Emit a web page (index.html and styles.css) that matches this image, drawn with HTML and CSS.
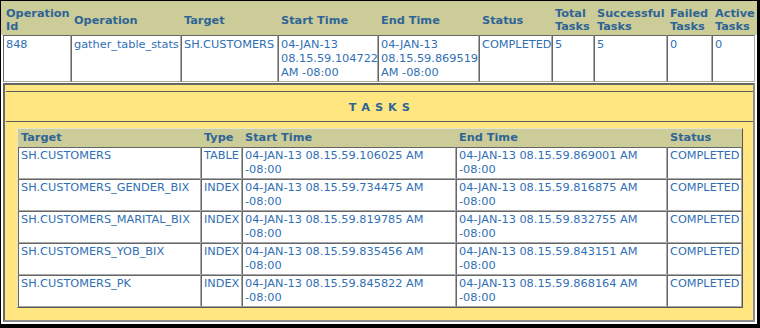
FILE: index.html
```html
<!DOCTYPE html>
<html>
<head>
<meta charset="utf-8">
<title>Operation Details</title>
<link rel="stylesheet" href="styles.css">
</head>
<body>
<div class="frame">
  <div class="ops-head">
    <div class="hc">Operation Id</div>
    <div class="hc">Operation</div>
    <div class="hc">Target</div>
    <div class="hc">Start Time</div>
    <div class="hc">End Time</div>
    <div class="hc">Status</div>
    <div class="hc">Total Tasks</div>
    <div class="hc">Successful Tasks</div>
    <div class="hc">Failed Tasks</div>
    <div class="hc">Active Tasks</div>
  </div>
  <div class="ops-row">
    <div class="dc">848</div>
    <div class="dc">gather_table_stats</div>
    <div class="dc">SH.CUSTOMERS</div>
    <div class="dc">04-JAN-13 08.15.59.104722 AM -08:00</div>
    <div class="dc">04-JAN-13 08.15.59.869519 AM -08:00</div>
    <div class="dc">COMPLETED</div>
    <div class="dc">5</div>
    <div class="dc">5</div>
    <div class="dc">0</div>
    <div class="dc">0</div>
  </div>
  <div class="tasks">
    <div class="tasks-title">T A S K S</div>
    <div class="tasks-table">
      <div class="tt-head">
        <div class="hc">Target</div>
        <div class="hc">Type</div>
        <div class="hc">Start Time</div>
        <div class="hc">End Time</div>
        <div class="hc">Status</div>
      </div>
      <div class="tt-row">
        <div class="dc">SH.CUSTOMERS</div>
        <div class="dc">TABLE</div>
        <div class="dc">04-JAN-13 08.15.59.106025 AM -08:00</div>
        <div class="dc">04-JAN-13 08.15.59.869001 AM -08:00</div>
        <div class="dc">COMPLETED</div>
      </div>
      <div class="tt-row">
        <div class="dc">SH.CUSTOMERS_GENDER_BIX</div>
        <div class="dc">INDEX</div>
        <div class="dc">04-JAN-13 08.15.59.734475 AM -08:00</div>
        <div class="dc">04-JAN-13 08.15.59.816875 AM -08:00</div>
        <div class="dc">COMPLETED</div>
      </div>
      <div class="tt-row">
        <div class="dc">SH.CUSTOMERS_MARITAL_BIX</div>
        <div class="dc">INDEX</div>
        <div class="dc">04-JAN-13 08.15.59.819785 AM -08:00</div>
        <div class="dc">04-JAN-13 08.15.59.832755 AM -08:00</div>
        <div class="dc">COMPLETED</div>
      </div>
      <div class="tt-row">
        <div class="dc">SH.CUSTOMERS_YOB_BIX</div>
        <div class="dc">INDEX</div>
        <div class="dc">04-JAN-13 08.15.59.835456 AM -08:00</div>
        <div class="dc">04-JAN-13 08.15.59.843151 AM -08:00</div>
        <div class="dc">COMPLETED</div>
      </div>
      <div class="tt-row">
        <div class="dc">SH.CUSTOMERS_PK</div>
        <div class="dc">INDEX</div>
        <div class="dc">04-JAN-13 08.15.59.845822 AM -08:00</div>
        <div class="dc">04-JAN-13 08.15.59.868164 AM -08:00</div>
        <div class="dc">COMPLETED</div>
      </div>
    </div>
  </div>
</div>
</body>
</html>
```

FILE: styles.css
```css
html, body {
  margin: 0;
  padding: 0;
  background: #ffffff;
}

.frame {
  width: 760px;
  height: 328px;
  box-sizing: border-box;
  border-style: solid;
  border-color: #000000;
  border-width: 1px 3px 4px 1px;
  background: #ffffff;
  font-family: "DejaVu Sans", Verdana, sans-serif;
  font-size: 11.3px;
  overflow: hidden;
}

.hc {
  font-weight: bold;
  color: #2f6496;
  line-height: 13px;
}

.dc {
  color: #2f6fb4;
  background: #ffffff;
  line-height: 14px;
  border: 1px solid;
  border-color: #666666 #a9a9a9 #a9a9a9 #666666;
}

/* Operation summary */
.ops-head,
.ops-row {
  display: grid;
  grid-template-columns: 68px 110px 97px 100px 101px 73px 42px 73px 45px 43px;
  padding: 0 2px;
}

.ops-head {
  background: #cccc99;
  align-items: center;
}

.ops-head .hc {
  padding: 6px 0 2px 3px;
}

.ops-head .hc:first-child {
  align-self: stretch;
}

.ops-row .dc {
  padding: 2px 0 1px 2px;
}

/* Tasks panel */
.tasks {
  margin: 1px 2px 2px;
  height: 239px;
  box-sizing: border-box;
  border: 2px solid;
  border-color: #666666 #8c8c8c #8c8c8c #666666;
  background: #ffe680;
  padding-top: 6px;
}

.tasks-title {
  margin-left: 1px;
  border-top: 1px solid #5a5a5a;
  border-bottom: 1px solid #5a5a5a;
  padding: 9px 0 6px;
  line-height: 14px;
  text-align: center;
  font-weight: bold;
  color: #2f6496;
  letter-spacing: 0.5px;
}

.tasks-table {
  margin: 6px 0 0 12px;
  width: 726px;
  box-sizing: border-box;
  border: 1px solid;
  border-color: #e4e4d0 #555555 #555555 #e4e4d0;
}

.tt-head,
.tt-row {
  display: grid;
  grid-template-columns: 183px 41px 214px 211px 75px;
}

.tt-head {
  background: #cccc99;
}

.tt-head .hc {
  padding: 2px 0 2px 3px;
  line-height: 14px;
}

.tt-row .dc {
  padding: 1px 1px 1px 2px;
}
```
